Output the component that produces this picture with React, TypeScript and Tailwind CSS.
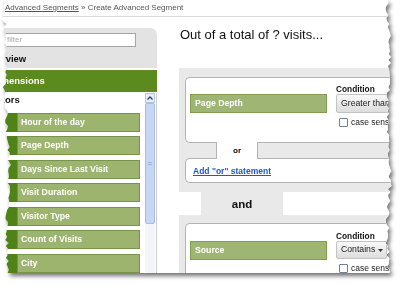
import React from 'react';

const dims = ['Hour of the day', 'Page Depth', 'Days Since Last Visit', 'Visit Duration', 'Visitor Type', 'Count of Visits', 'City'];

// ragged paper edge, seeded so it is the same on every load
function tornEdge(x: number, amp: number, seed: number, deeper = 0): [number, number][] {
	let s = seed;
	const rnd = () => {
		s = (s * 9301 + 49297) % 233280;
		return s / 233280;
	};
	const pts: [number, number][] = [];
	for (let y = 0; y <= 273; y += 3) {
		const base = y > 108 ? x + deeper : x;
		pts.push([base + Math.sin(y / 19 + seed) * 1.4 + rnd() * amp, y]);
	}
	return pts;
}

const right = tornEdge(386.5, 4, 11);
const left = tornEdge(2.5, 4, 5, 3.5).reverse();
const paperClip = `polygon(${[...right, ...left].map(([x, y]) => `${x.toFixed(1)}px ${y}px`).join(', ')})`;

function DimItem({ label }: { label: string }) {
	return (
		<div className="flex h-[19px] w-[140px]">
			<div className="w-[17px] bg-[#4f8318]" />
			<div className="flex-1 border border-[#77954a] bg-[#9db46f] pl-[3px] text-[8.7px] font-bold leading-[17px] text-white">
				{label}
			</div>
		</div>
	);
}

function ConditionBlock({ dim, select, selectW, selectH }: { dim: string; select: React.ReactNode; selectW: string; selectH: string }) {
	return (
		<div className="flex items-start">
			<div className="ml-[4px] mt-[9px] h-[19px] w-[137px] shrink-0 border border-[#809d50] bg-[#9fb574] pl-[4px] text-[8.7px] font-bold leading-[17px] text-white">
				{dim}
			</div>
			<div className="ml-[9px] flex flex-col">
				<div className="h-[9px] text-[8.3px] font-bold leading-[9px] text-[#111]">Condition</div>
				<div className={`${selectW} ${selectH} flex items-center whitespace-nowrap rounded-[2px] border border-[#c3c3c3] bg-linear-to-b from-[#f8f8f8] to-[#dddddd] pl-[4px] text-[8.7px] text-[#222]`}>
					{select}
				</div>
				<div className="mt-[4px] flex items-center gap-[3px] whitespace-nowrap">
					<div className="ml-[3px] h-[9px] w-[9px] rounded-[1px] border border-[#6e809b] bg-white" />
					<span className="text-[8.5px] leading-[10px] text-[#222]">case sensitive</span>
				</div>
			</div>
		</div>
	);
}

export default function App() {
	return (
		<div className="relative h-[285px] w-[400px] overflow-hidden bg-white font-['Liberation_Sans',Arial,sans-serif]">
			<div className="drop-shadow-[2px_3px_2px_rgba(0,0,0,0.55)]">
				<div className="flex h-[273px] w-[394px] flex-col overflow-hidden bg-white" style={{ clipPath: paperClip }}>
					{/* breadcrumb */}
					<div className="h-[17px] shrink-0 border-b border-[#dcdcdc] pl-[5px] pt-[1px] text-[8px] leading-[14px] text-[#555]">
						<span className="underline">Advanced Segments</span> » Create Advanced Segment
					</div>

					<div className="flex min-h-0 flex-1">
						{/* left panel */}
						<div className="flex w-[157px] shrink-0 flex-col overflow-hidden pt-[11px]">
							<div className="h-[40px] shrink-0 rounded-tr-[7px] bg-[#e3e3e3] pt-[5px]">
								<div className="h-[14px] w-[136px] border border-[#a5a5a5] bg-white pl-[6px] text-[8px] leading-[12px] text-[#aaa]">
									filter
								</div>
								<div className="-ml-[16px] mt-[6px] whitespace-nowrap text-[9.5px] font-bold leading-[12px] text-[#111]">Overview</div>
							</div>
							<div className="mt-[2px] h-[22px] shrink-0 whitespace-nowrap bg-[#5b8b1e] text-[9.5px] font-bold leading-[22px] text-white">
								<span className="-ml-[9px]">Dimensions</span>
							</div>
							<div className="mt-[1px] flex flex-1 border-r border-[#cfcfcf]">
								<div className="flex w-[145px] flex-col">
									<div className="-ml-[15px] h-[14px] whitespace-nowrap text-[9.5px] font-bold leading-[14px] text-[#111]">Visitors</div>
									<div className="mt-[5.5px] flex flex-col gap-[4.5px]">
										{dims.map((d) => (
											<DimItem key={d} label={d} />
										))}
									</div>
								</div>
								<div className="flex w-[10px] flex-col bg-[#f3f5fa]">
									<div className="flex h-[10px] items-center justify-center border border-[#b5c6e5] bg-[#e6edfa]">
										<svg width="6" height="4" viewBox="0 0 6 4">
											<polyline points="0.5,3.5 3,1 5.5,3.5" fill="none" stroke="#24406e" strokeWidth="1.3" />
										</svg>
									</div>
									<div className="flex h-[121px] flex-col items-center justify-center gap-[1px] rounded-[2px] border border-[#a9bde2] bg-[#c6d7f5]">
										<div className="h-px w-[4px] bg-[#9bb2dc]" />
										<div className="h-px w-[4px] bg-[#9bb2dc]" />
									</div>
								</div>
							</div>
						</div>

						{/* main */}
						<div className="flex min-w-0 flex-1 flex-col pl-[22px]">
							<div className="ml-[1px] mt-[10px] whitespace-nowrap text-[13px] leading-[16px] text-[#111]">Out of a total of ? visits...</div>

							<div className="mt-[25px] flex flex-col bg-[#e9e9e9] pb-[9px] pl-[6px] pt-[9px]">
								<div className="h-[66px] rounded-l-[5px] border border-r-0 border-[#b4b4b4] bg-white pt-[7px]">
									<ConditionBlock dim="Page Depth" select="Greater than" selectW="w-[70px]" selectH="h-[19px]" />
								</div>
								<div className="relative z-10 -my-[1px] ml-[31px] h-[17px] w-[42px] border-x border-[#b4b4b4] bg-white pt-[1px] text-center text-[8px] font-bold leading-[16px] text-[#111]">
									or
								</div>
								<div className="h-[25px] rounded-l-[5px] border border-r-0 border-[#b4b4b4] bg-white pl-[7px] pt-[1px] text-[8.5px] font-bold leading-[23px]">
									<span className="text-[#1f59c4] underline">Add "or" statement</span>
								</div>
							</div>

							<div className="ml-[22px] h-[23px] w-[82px] bg-[#e9e9e9] pt-[1px] text-center text-[11.5px] font-bold leading-[23px] text-[#111]">and</div>

							<div className="flex flex-1 flex-col bg-[#e9e9e9] pl-[6px] pt-[8px]">
								<div className="flex-1 rounded-tl-[5px] border-l border-t border-[#b4b4b4] bg-white pt-[8px]">
									<ConditionBlock
										dim="Source"
										select={
											<>
												Contains
												<svg className="ml-[3px]" width="5" height="3" viewBox="0 0 5 3">
													<polygon points="0,0 5,0 2.5,3" fill="#333" />
												</svg>
											</>
										}
										selectW="w-[51px]"
										selectH="h-[18px]"
									/>
								</div>
							</div>
						</div>
					</div>
				</div>
			</div>
		</div>
	);
}
